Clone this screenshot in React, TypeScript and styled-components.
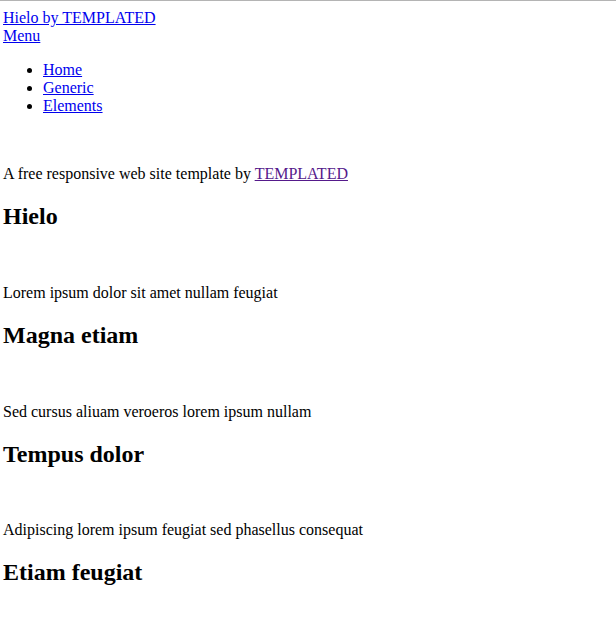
import React from "react";
import styled, { createGlobalStyle } from "styled-components";

const Global = createGlobalStyle`
  html, body { margin: 0; padding: 0; background: #fff; }
  body {
    border-top: 1px solid #b4b4b4;
    padding: 8px 3px 0 3px;
    font-family: "Liberation Serif", "Times New Roman", serif;
    font-size: 16px;
    color: #000;
  }
`;

const Header = styled.header``;

const Link = styled.a<{ $visited?: boolean }>`
  color: ${(p) => (p.$visited ? "#551a8b" : "#0000ee")};
  text-decoration: underline;
`;

const Line = styled.div``;

const Nav = styled.nav``;

const NavList = styled.ul`
  margin: 16px 0;
  padding-left: 40px;
  list-style: disc;
`;

const Section = styled.section``;

const ImageSlot = styled.div`
  height: 18px;
`;

const Lead = styled.p`
  margin: 16px 0;
`;

const Title = styled.h2`
  font-size: 24px;
  font-weight: bold;
  margin: 19.92px 0;
`;

const items = [
  { lead: "Lorem ipsum dolor sit amet nullam feugiat", title: "Magna etiam" },
  { lead: "Sed cursus aliuam veroeros lorem ipsum nullam", title: "Tempus dolor" },
  { lead: "Adipiscing lorem ipsum feugiat sed phasellus consequat", title: "Etiam feugiat" },
];

export default function App() {
  return (
    <>
      <Global />
      <Header>
        <Line>
          <Link href="#">Hielo by TEMPLATED</Link>
        </Line>
        <Line>
          <Link href="#">Menu</Link>
        </Line>
      </Header>
      <Nav>
        <NavList>
          <li><Link href="#">Home</Link></li>
          <li><Link href="#">Generic</Link></li>
          <li><Link href="#">Elements</Link></li>
        </NavList>
      </Nav>
      <Section>
        <ImageSlot />
        <Lead>
          A free responsive web site template by <Link $visited href="#">TEMPLATED</Link>
        </Lead>
        <Title>Hielo</Title>
      </Section>
      {items.map((it) => (
        <Section key={it.title}>
          <ImageSlot />
          <Lead>{it.lead}</Lead>
          <Title>{it.title}</Title>
        </Section>
      ))}
    </>
  );
}
